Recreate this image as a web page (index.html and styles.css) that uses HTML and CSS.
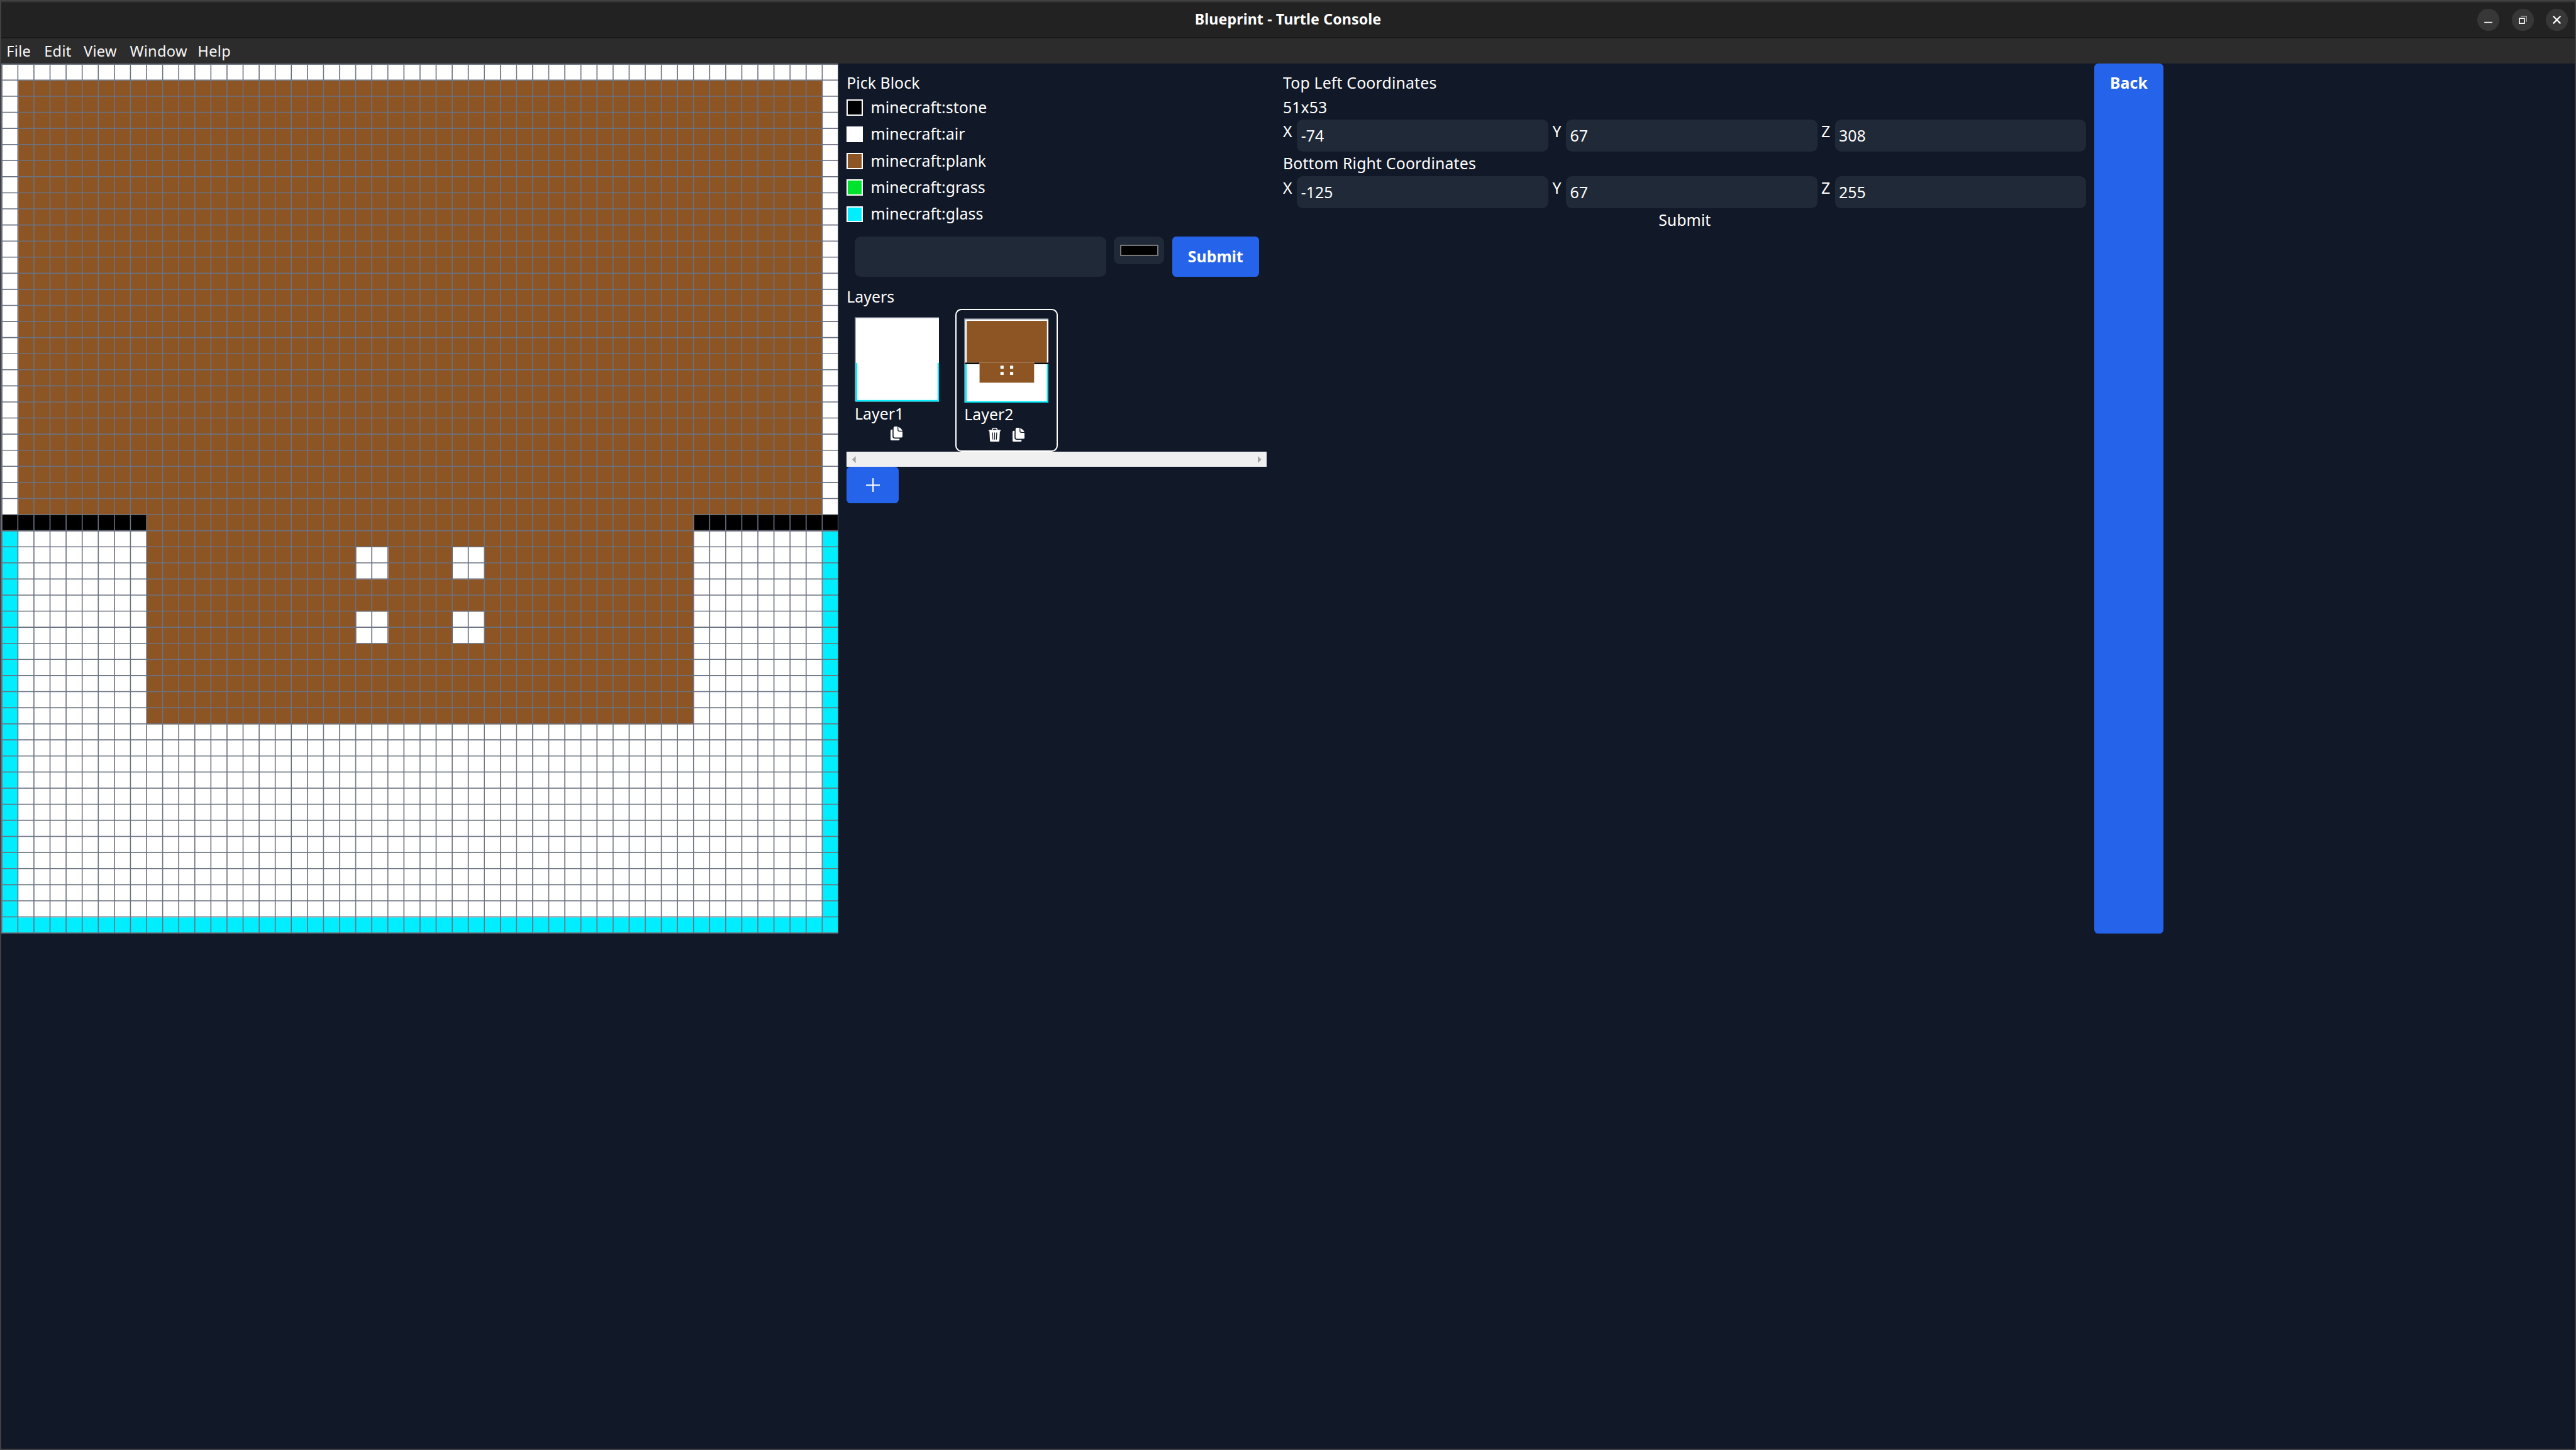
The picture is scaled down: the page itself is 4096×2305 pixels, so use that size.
FILE: index.html
```html
<!DOCTYPE html>
<html lang="en">
<head>
<meta charset="utf-8">
<title>Blueprint - Turtle Console</title>
<link rel="stylesheet" href="styles.css">
</head>
<body>
<div class="window">
  <header class="titlebar">
    <h1 class="title">Blueprint - Turtle Console</h1>
    <div class="controls">
      <svg class="control" viewBox="0 0 44 44"><circle cx="22" cy="22" r="22"/><path d="M14 27h16" class="ink"/></svg>
      <svg class="control" viewBox="0 0 44 44"><circle cx="22" cy="22" r="22"/><path d="M18 15h11v11" class="ink dim"/><path d="M15 19h10v10h-10z" class="ink"/></svg>
      <svg class="control" viewBox="0 0 44 44"><circle cx="22" cy="22" r="22"/><path d="M14.8 14.8l14.4 14.4M29.2 14.8l-14.4 14.4" class="ink thick"/></svg>
    </div>
  </header>
  <nav class="menubar">
    <span class="menu file">File</span><span class="menu edit">Edit</span><span class="menu view">View</span><span class="menu win">Window</span><span class="menu help">Help</span>
  </nav>
  <main class="content">
    <svg class="canvas" id="canvas" viewBox="0 0 1666 1730"></svg>
    <section class="blocks">
      <div class="line">Pick Block</div>
      <ul class="palette">
        <li><i class="swatch stone"></i><span>minecraft:stone</span></li>
        <li><i class="swatch air"></i><span>minecraft:air</span></li>
        <li><i class="swatch plank"></i><span>minecraft:plank</span></li>
        <li><i class="swatch grass"></i><span>minecraft:grass</span></li>
        <li><i class="swatch glass"></i><span>minecraft:glass</span></li>
      </ul>
      <div class="add-block">
        <div class="field name"></div>
        <div class="color"><i></i></div>
        <div class="button submit">Submit</div>
      </div>
      <div class="line">Layers</div>
      <div class="layers">
        <div class="layer">
          <svg class="thumb" id="thumb1" viewBox="0 0 168 168"></svg>
          <div class="line">Layer1</div>
          <div class="actions"><svg class="icon" viewBox="0 0 24 28"><use href="#copy"/></svg></div>
        </div>
        <div class="layer active">
          <svg class="thumb" id="thumb2" viewBox="0 0 168 168"></svg>
          <div class="line">Layer2</div>
          <div class="actions"><svg class="icon" viewBox="0 0 24 28"><use href="#trash"/></svg><svg class="icon" viewBox="0 0 24 28"><use href="#copy"/></svg></div>
        </div>
      </div>
      <div class="scrollbar">
        <svg viewBox="0 0 7 14"><path d="M7 0v14L0 7z"/></svg>
        <svg viewBox="0 0 7 14"><path d="M0 0v14l7-7z"/></svg>
      </div>
      <div class="button add"><svg viewBox="0 0 28 28"><path d="M14 1.2v25.6M1.2 14h25.6"/></svg></div>
    </section>
    <section class="coords">
      <div class="line wide">Top Left Coordinates</div>
      <div class="line">51x53</div>
      <div class="row">
        <label class="x">X</label><div class="field">-74</div>
        <label class="y">Y</label><div class="field">67</div>
        <label class="z">Z</label><div class="field">308</div>
      </div>
      <div class="line wide">Bottom Right Coordinates</div>
      <div class="row">
        <label class="x">X</label><div class="field">-125</div>
        <label class="y">Y</label><div class="field">67</div>
        <label class="z">Z</label><div class="field">255</div>
      </div>
      <div class="line center">Submit</div>
    </section>
    <div class="button back">Back</div>
  </main>
</div>
<svg class="defs">
  <symbol id="copy" viewBox="0 0 24 28">
    <path d="M2.5 6H4v13.5A4.5 4.5 0 0 0 8.500 24H18v1.500A2.500 2.500 0 0 1 15.500 28H2.500A2.500 2.500 0 0 1 0 25.500v-17A2.500 2.500 0 0 1 2.500 6z"/>
    <path d="M8.500 0H14v6.500A3.500 3.500 0 0 0 17.500 10H24v9.500A2.500 2.500 0 0 1 21.500 22H8.500A2.500 2.500 0 0 1 6 19.500v-17A2.500 2.500 0 0 1 8.500 0z"/>
    <path d="M15.300.8C19.500 2 22.500 5 23.700 8.600H17.500A1.800 1.800 0 0 1 15.700 7z"/>
  </symbol>
  <symbol id="trash" viewBox="0 0 24 28">
    <path fill-rule="evenodd" d="M1 4.500H6C6.500 1.800 7.800.2 9.500 0h5C16.200.2 17.500 1.800 18 4.500h5a1 1 0 0 1 0 2.500h-.6l-1 18.500A2.600 2.600 0 0 1 18.800 28H5.200A2.600 2.600 0 0 1 2.600 25.500L1.600 7H1a1 1 0 0 1 0-2.500zM8 4.500h8C15.600 2.900 15 2 14.200 2H9.800C9 2 8.400 2.900 8 4.500zM7 9.500l.8 14h1.400l-.6-14zM11.300 9.500v14h1.400v-14zM15.400 9.500l-.6 14h1.400l.8-14z"/>
  </symbol>
</svg>
<script src="app.js"></script>
</body>
</html>
```

FILE: styles.css
```css
/* 1rem is one hundred design units */
html { font-size: 79.938px; }
* { box-sizing: border-box; }
body {
  margin: 0;
  height: 2305px;
  padding: .02rem;
  overflow: hidden;
  background: #424242;
  color: #fff;
  font-family: "Noto Sans", sans-serif;
}
svg { display: block; flex: none; }
.defs { position: absolute; width: 0; height: 0; }
.window {
  height: 100%;
  background: #111827;
}
.titlebar {
  display: flex;
  align-items: center;
  justify-content: flex-end;
  position: relative;
  height: .74rem;
  padding-right: .14rem;
  border-top: 2px solid #323232;
  border-bottom: 2px solid #191919;
  background: #222;
}
.title {
  position: absolute;
  left: 0;
  right: 0;
  margin: 0;
  text-align: center;
  font-size: .29rem;
  letter-spacing: .0015rem;
  line-height: .7rem;
}
.controls { display: flex; gap: .24rem; }
.control { width: .44rem; height: .44rem; fill: #373737; }
.ink { fill: none; stroke: #fff; stroke-width: 2; }
.dim { stroke: #969696; }
.thick { stroke-width: 2.8; }
.menubar {
  display: flex;
  height: .5rem;
  padding-left: .108rem;
  background: #2c2c2c;
  font-size: .295rem;
  letter-spacing: .004rem;
  line-height: .51rem;
}
.menu { color: #f7f7f7; flex: none; }
.file { width: .75rem; }
.edit { width: .785rem; }
.view { width: .92rem; }
.win { width: 1.35rem; }

.content { display: flex; height: 17.3rem; font-size: .31rem; letter-spacing: .001rem; }
.canvas { width: 16.66rem; height: 17.3rem; }
.line { height: .48rem; line-height: .48rem; white-space: nowrap; }
.wide { letter-spacing: .0025rem; }
.center { text-align: center; }
.blocks { width: 8.68rem; padding: .16rem; flex: none; }
.palette {
  list-style: none;
  margin: 0 0 .21rem;
  padding: 0;
  display: flex;
  flex-direction: column;
  gap: .05rem;
}
.palette li { display: flex; align-items: center; gap: .16rem; height: .48rem; line-height: .48rem; }
.swatch { width: .32rem; height: .32rem; border: 2px solid #fff; }
.stone { background: #000; }
.air { background: #fff; }
.plank { background: #8d5424; }
.grass { background: #00e32d; }
.glass { background: #00eeff; }
.add-block { display: flex; align-items: flex-start; gap: .16rem; margin: 0 .16rem .16rem; }
.field { width: 5rem; height: .64rem; line-height: .64rem; padding-left: .08rem; border-radius: .12rem; background: #1f2937; flex: none; }
.name { height: .8rem; }
.color { width: 1rem; height: .54rem; padding: .16rem .12rem; border-radius: .12rem; background: #1f2937; flex: none; }
.color i { display: block; height: .22rem; border: 2px solid #767676; background: #000; }
.button { display: flex; justify-content: center; border-radius: .08rem; background: #2563eb; font-weight: 700; }
.submit { width: 1.72rem; height: .8rem; line-height: .8rem; }
.layers { display: flex; align-items: flex-start; gap: .16rem; height: 2.84rem; }
.layer { width: 2rem; padding: .16rem; }
.active { width: 2.04rem; height: 2.84rem; border: 2px solid #fff; border-radius: .12rem; padding: calc(.18rem - 2px); }
.thumb { width: 1.68rem; height: 1.68rem; }
.actions { display: flex; justify-content: center; gap: .24rem; padding-top: .02rem; }
.icon { width: .24rem; height: .28rem; fill: #fff; }
.scrollbar {
  display: flex;
  align-items: center;
  justify-content: space-between;
  height: .3rem;
  padding: 0 .11rem;
  background: #f0f0f0;
}
.scrollbar svg { width: .07rem; height: .14rem; fill: #a3a3a3; }
.add { width: 1.04rem; height: .72rem; align-items: center; }
.add svg { width: .28rem; height: .28rem; fill: none; stroke: #fff; stroke-width: 2.6; stroke-linecap: round; }
.coords { width: 16.3rem; padding: .16rem; flex: none; }
.row { display: flex; height: .64rem; line-height: .48rem; }
.row label { flex: none; }
.row .field { line-height: .64rem; }
.x { width: .28rem; }
.y { width: .35rem; padding-left: .08rem; }
.z { width: .35rem; padding-left: .08rem; }
.back { width: 1.37rem; height: 17.3rem; padding-top: .16rem; line-height: .48rem; }
```

FILE: app.js
```js
const COLS = 52, ROWS = 54;
const AIR = '#fff', PLANK = '#8d5424', STONE = '#000', GLASS = '#00eeff', LINE = '#6b7280';

// Blocks as [column, row, columns, rows, colour]
const walls = [
  [0, 0, COLS, ROWS, AIR],
  [0, 29, 1, 25, GLASS],
  [51, 29, 1, 25, GLASS],
  [0, 53, COLS, 1, GLASS],
];
const deck = [
  [1, 1, 50, 27, PLANK],
  [0, 28, 9, 1, STONE],
  [43, 28, 9, 1, STONE],
  [9, 28, 34, 13, PLANK],
  [22, 30, 2, 2, AIR],
  [28, 30, 2, 2, AIR],
  [22, 34, 2, 2, AIR],
  [28, 34, 2, 2, AIR],
];

function blocks(list, cw, ch) {
  return list.map(([c, r, w, h, fill]) =>
    `<rect x="${2 + c * cw}" y="${2 + r * ch}" width="${w * cw}" height="${h * ch}" fill="${fill}"/>`).join('');
}

function grid() {
  let d = '';
  for (let c = 0; c <= COLS; c++) d += `M${c * 32 + 1} 0V1730`;
  for (let r = 0; r <= ROWS; r++) d += `M0 ${r * 32 + 1}H1666`;
  return `<path d="${d}" stroke="${LINE}" stroke-width="2"/>`;
}

function thumb(id, list) {
  document.getElementById(id).innerHTML =
    `<rect width="168" height="168" fill="${LINE}"/>` + blocks(list, 166 / COLS, 166 / ROWS);
}

document.getElementById('canvas').innerHTML = blocks([...walls, ...deck], 32, 32) + grid();
thumb('thumb1', walls);
thumb('thumb2', [...walls, ...deck]);
```
